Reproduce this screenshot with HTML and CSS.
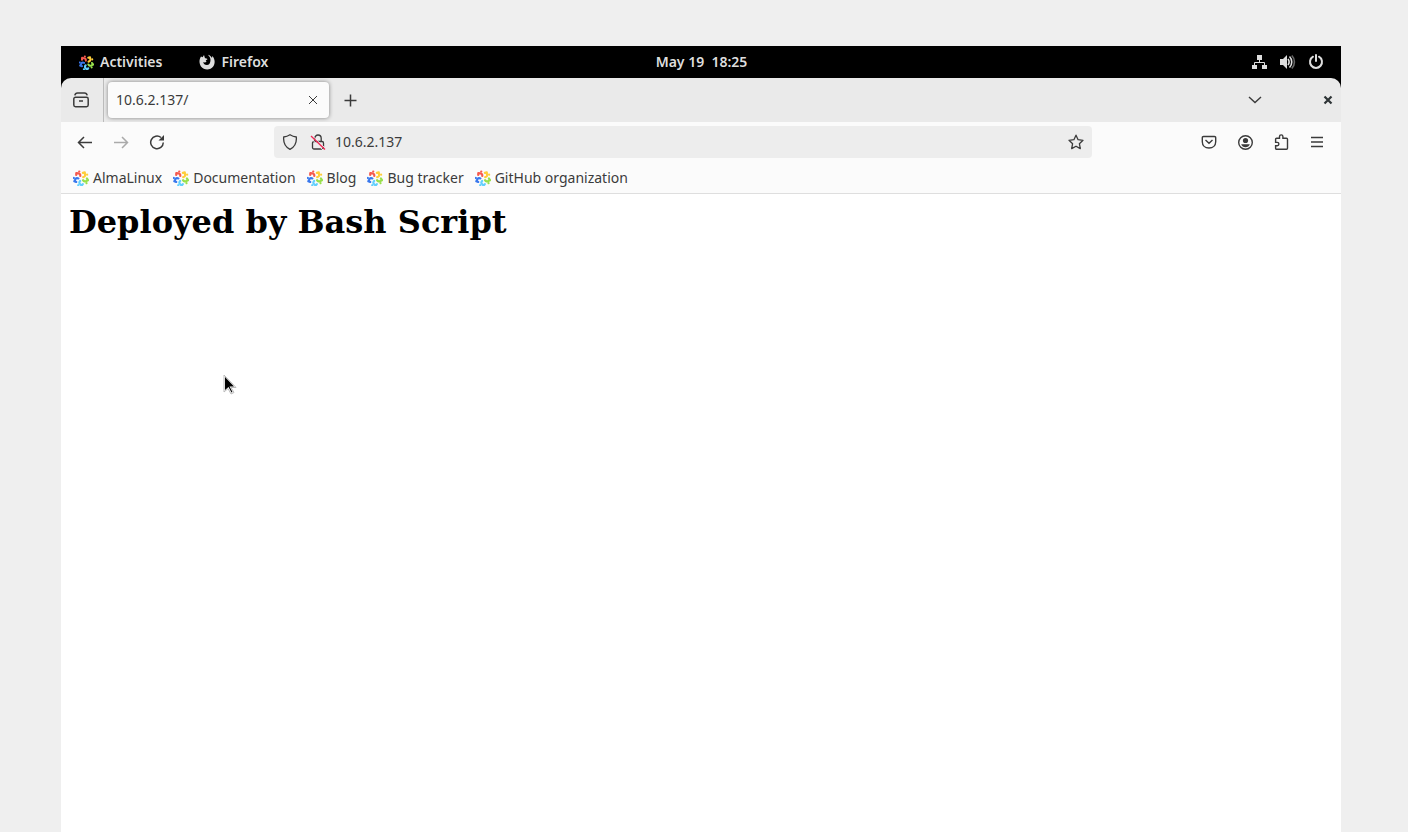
FILE: index.html
```html
<!DOCTYPE html>
<html lang="en">
<head>
<meta charset="utf-8">
<meta name="viewport" content="width=device-width, initial-scale=1">
<title>10.6.2.137/</title>
<link rel="stylesheet" href="styles.css">
</head>
<body>
<svg class="sprites" aria-hidden="true">
  <symbol id="alma" viewBox="0 0 16 16">
    <g fill="none" stroke-width="2.200" stroke-linecap="round" stroke-linejoin="round">
      <g stroke="#f65a4e"><path d="M7.300 6C7.500 4.200 6.400 3.200 5 3.400L3.300 3 3.200 5"/><path d="M6.200 1.500h.1"/></g>
      <g stroke="#ffce3a" transform="rotate(72 8 8.500)"><path d="M7.300 6C7.500 4.200 6.400 3.200 5 3.400L3.300 3 3.200 5"/><path d="M6.200 1.500h.1"/></g>
      <g stroke="#98e04c" transform="rotate(144 8 8.500)"><path d="M7.300 6C7.500 4.200 6.400 3.200 5 3.400L3.300 3 3.200 5"/><path d="M6.200 1.500h.1"/></g>
      <g stroke="#62cffd" transform="rotate(216 8 8.500)"><path d="M7.300 6C7.500 4.200 6.400 3.200 5 3.400L3.300 3 3.200 5"/><path d="M6.200 1.500h.1"/></g>
      <g stroke="#3978ed" transform="rotate(288 8 8.500)"><path d="M7.300 6C7.500 4.200 6.400 3.200 5 3.400L3.300 3 3.200 5"/><path d="M6.200 1.500h.1"/></g>
    </g>
  </symbol>
</svg>
<div class="desktop">
  <header class="topbar">
    <div class="topbar-left">
      <button class="top-button"><svg class="alma-small" viewBox="0 0 16 16"><use href="#alma"/></svg>Activities</button>
      <button class="top-button"><svg class="icon" viewBox="0 0 16 16"><path d="M5 1 3.600 3.300 2 2.500C-.2 6 .2 9.500 2 12.500c3 4 9.400 4 12.200.1C16.300 9.500 16.200 4.700 13.300 2L13 4C12 2.300 11 1.200 9 .7c1.300 1.500 2.500 3 2.500 5.300 0 3-1.400 5-3.600 5-2.100 0-3.500-1.200-3.600-3 1 .6 2.200.6 3.200-.3L6.700 6.500l1.800-1.300c-.5-.8-1.500-1-2.500-1Z" fill="#dedede"/></svg>Firefox</button>
    </div>
    <time class="clock">May 19&nbsp; 18:25</time>
    <button class="system" aria-label="System menu">
      <svg class="icon" viewBox="0 0 16 16"><path d="M5 1h5v5H5zM0 11h5v4H0zM10 11h5v4h-5z" fill="#dedede"/><path d="M7.500 6v2.500M2.500 11V8.500h10V11" fill="none" stroke="#dedede"/></svg>
      <svg class="icon" viewBox="0 0 16 16"><path d="M0 5h3l4-4v14l-4-4H0z" fill="#dedede"/><path d="M8 5c1.500 2 1.500 4 0 6M9.500 2.500c3 3 3 8 0 11" fill="none" stroke="#dedede" stroke-width="1.600"/><path d="M11.800 1.500c3.500 3.500 3.500 9.500 0 13" fill="none" stroke="#666" stroke-width="1.600"/></svg>
      <svg class="icon" viewBox="0 0 16 16"><path d="M5 2.700a6 6 0 1 0 6 0M8 1v6" fill="none" stroke="#dedede" stroke-width="2" stroke-linecap="round"/></svg>
    </button>
  </header>
  <div class="browser">
    <div class="tabs">
      <button class="tool view" aria-label="Firefox View"><svg class="icon" viewBox="0 0 16 16"><path d="M1.800 3.400Q2.300 1 4.500 1h7q2.200 0 2.700 2.400M2.500 5.200h11a1.700 1.700 0 0 1 1.700 1.700v6.200a1.700 1.700 0 0 1-1.700 1.700h-11a1.700 1.700 0 0 1-1.700-1.700V6.900a1.700 1.700 0 0 1 1.700-1.700ZM6 9h4" fill="none" stroke="currentColor" stroke-width="1.500"/></svg></button>
      <div class="tab"><span>10.6.2.137/</span><button class="tab-close" aria-label="Close tab"><svg class="icon" viewBox="0 0 16 16"><path d="m4 4 8 8M12 4l-8 8" stroke="currentColor"/></svg></button></div>
      <button class="tool new-tab" aria-label="New tab"><svg class="icon" viewBox="0 0 16 16"><path d="M8.500 2.500v12M2.500 8.500h12" stroke="currentColor" stroke-width="1.500"/></svg></button>
      <button class="tool list-tabs" aria-label="List all tabs"><svg class="icon" viewBox="0 0 16 16"><path d="m2 5 6 5.500L14 5" fill="none" stroke="currentColor" stroke-width="1.400"/></svg></button>
      <button class="window-close" aria-label="Close window"><svg class="icon" viewBox="0 0 16 16"><path d="m4.500 4.500 7 7M11.500 4.500l-7 7" stroke="#2e3436" stroke-width="2.200"/></svg></button>
    </div>
    <div class="navigation">
      <div class="nav-buttons">
        <button class="tool" aria-label="Back"><svg class="icon" viewBox="0 0 16 16"><path d="M15 8.500H1.500M7 3 1.500 8.500 7 14" fill="none" stroke="currentColor" stroke-width="1.500"/></svg></button>
        <button class="tool disabled" aria-label="Forward" disabled><svg class="icon" viewBox="0 0 16 16"><path d="M1 8.500h13.500M9 3l5.500 5.500L9 14" fill="none" stroke="currentColor" stroke-width="1.500"/></svg></button>
        <button class="tool" aria-label="Reload"><svg class="icon" viewBox="0 0 16 16"><path d="M14.300 8.500A6.300 6.300 0 1 1 12 3.500" fill="none" stroke="currentColor" stroke-width="1.500"/><path d="M15 1v5.500H9.500z" fill="currentColor"/></svg></button>
      </div>
      <div class="address">
        <svg class="icon" viewBox="0 0 16 16"><path d="M8 .8c2 1.300 4 2 6.300 2.200.5 5.500-1.500 10-6.300 12.300C3.200 13 1.200 8.500 1.700 3 4 2.800 6 2.100 8 .8Z" fill="none" stroke="currentColor" stroke-width="1.300"/></svg>
        <svg class="icon" viewBox="0 0 16 16"><path d="M4 7.500h8a1.500 1.500 0 0 1 1.500 1.500v4.500a1.500 1.500 0 0 1-1.500 1.500H4a1.500 1.500 0 0 1-1.500-1.500V9A1.500 1.500 0 0 1 4 7.500ZM4.800 7V4.200a3.200 3.200 0 0 1 6.400 0V7" fill="none" stroke="currentColor" stroke-width="1.300"/><path d="m1 4.500 12 11.500M2 1.500 15 14" stroke="#ededed"/><path d="m1 2 14 13.500" stroke="#ef2854" stroke-width="1.300"/></svg>
        <input class="url" type="text" value="10.6.2.137" aria-label="Address">
        <button class="star" aria-label="Bookmark this page"><svg class="icon" viewBox="0 0 16 16"><path d="m8 1.200 2.100 4.500 4.900.6-3.600 3.400.9 4.900L8 12.200l-4.300 2.400.9-4.900L1 6.300l4.900-.6Z" fill="none" stroke="currentColor" stroke-width="1.300" stroke-linejoin="round"/></svg></button>
      </div>
      <div class="nav-tools">
        <button class="tool" aria-label="Pocket"><svg class="icon" viewBox="0 0 16 16"><path d="M2.500 2.500h11a1.200 1.200 0 0 1 1.200 1.200v4C14.700 11.500 12 14 8 14s-6.700-2.500-6.700-6.300v-4a1.200 1.200 0 0 1 1.200-1.200ZM4.500 6 8 9.300 11.500 6" fill="none" stroke="currentColor" stroke-width="1.400"/></svg></button>
        <button class="tool" aria-label="Account"><svg class="icon" viewBox="0 0 16 16"><circle cx="8.500" cy="8.500" r="6.800" fill="none" stroke="currentColor" stroke-width="1.400"/><circle cx="8.500" cy="6.500" r="2.600" fill="currentColor"/><path d="M4.200 10.300h8.600c-.7 2-2.200 3-4.300 3s-3.600-1-4.300-3Z" fill="currentColor"/></svg></button>
        <button class="tool" aria-label="Extensions"><svg class="icon" viewBox="0 0 16 16"><path d="M6.500 4.300V2.600a1.700 1.700 0 0 1 3.400 0v1.700h3.600a1 1 0 0 1 1 1v8.900a1 1 0 0 1-1 1H3.600a1 1 0 0 1-1-1v-2.400h1.600a1.700 1.700 0 0 0 0-3.400H2.600V5.300a1 1 0 0 1 1-1Z" fill="none" stroke="currentColor" stroke-width="1.400"/></svg></button>
        <button class="tool" aria-label="Application menu"><svg class="icon" viewBox="0 0 16 16"><path d="M2 3.500h12M2 8h12M2 12.500h12" stroke="currentColor" stroke-width="1.300"/></svg></button>
      </div>
    </div>
    <nav class="bookmarks" aria-label="Bookmarks">
      <a href="#"><svg class="icon"><use href="#alma"/></svg>AlmaLinux</a>
      <a href="#"><svg class="icon"><use href="#alma"/></svg>Documentation</a>
      <a href="#"><svg class="icon"><use href="#alma"/></svg>Blog</a>
      <a href="#"><svg class="icon"><use href="#alma"/></svg>Bug tracker</a>
      <a href="#"><svg class="icon"><use href="#alma"/></svg>GitHub organization</a>
    </nav>
    <main class="page"><h1>Deployed by Bash Script</h1></main>
  </div>
  <svg class="cursor" viewBox="0 0 14 22" aria-hidden="true"><path d="M1 1v17l4-3.500 3 5.500 3-1.500-3-5h5Z" fill="#fff" stroke="#bbb"/><path d="M2 3v13l3.500-3 3 5.500 1-.5-3-5.500h4.500Z" fill="#000"/></svg>
</div>
</body>
</html>
```
FILE: styles.css
```css
* { box-sizing: border-box; }
body {
  margin: 0;
  background: #efefef;
  color: #3b3b3b;
  font: 14px/20px "Noto Sans", sans-serif;
}
button, input { font: inherit; color: inherit; border: 0; padding: 0; background: none; }
a { color: inherit; text-decoration: none; }
.sprites { display: none; }
.icon { display: block; flex: none; width: 16px; height: 16px; }
.desktop {
  position: relative;
  display: flex;
  flex-direction: column;
  min-height: 100vh;
  padding: 46px 67px 0 61px;
}
.topbar {
  display: grid;
  grid-template-columns: 1fr auto 1fr;
  align-items: center;
  height: 32px;
  padding: 0 17px 0 18px;
  background: #000;
  color: #dedede;
  font-weight: 600;
}
.topbar-left { display: flex; gap: 37px; }
.top-button { display: flex; align-items: center; gap: 6px; }
.alma-small { width: 15px; height: 15px; }
.system { display: flex; justify-self: end; gap: 12px; }
.browser {
  flex: 1;
  display: flex;
  flex-direction: column;
  background: linear-gradient(#000 20px, #fff 20px);
}
.tabs {
  display: flex;
  align-items: center;
  height: 44px;
  background: #eaeaea;
  border-radius: 10px 10px 0 0;
}
.tool { display: grid; place-items: center; width: 36px; height: 32px; }
.view { width: 43px; height: 44px; padding-right: 2px; border-right: 1px solid #bcbcbc; }
.tab {
  display: flex;
  align-items: center;
  justify-content: space-between;
  width: 221px;
  height: 36px;
  margin-left: 4px;
  padding: 0 8px;
  background: #fbfbfb;
  border-radius: 4px;
  box-shadow: 0 0 4px rgba(0, 0, 0, .45);
}
.new-tab { margin-left: 3px; }
.list-tabs { margin-left: auto; }
.window-close { margin: 0 5px 0 47px; }
.navigation {
  display: flex;
  align-items: center;
  height: 40px;
  padding: 0 6px;
  background: #fbfbfb;
}
.nav-buttons, .nav-tools { display: flex; }
.disabled { color: #aaa; }
.address {
  flex: 1;
  display: flex;
  align-items: center;
  gap: 12px;
  height: 32px;
  margin: 0 99px;
  padding: 0 8px;
  background: #ededed;
  border-radius: 4px;
}
.url { flex: 1; min-width: 0; margin-left: -3px; outline: 0; }
.bookmarks {
  display: flex;
  align-items: center;
  gap: 11px;
  height: 32px;
  padding: 0 12px;
  background: #fbfbfb;
  border-bottom: 1px solid #dedede;
}
.bookmarks a { display: flex; align-items: center; gap: 4px; }
.page { flex: 1; padding: 8px; background: #fff; color: #000; }
h1 { margin: 0; font: bold 32px/40px "DejaVu Serif", serif; }
.cursor { position: absolute; left: 223px; top: 374px; width: 14px; height: 22px; }
```
